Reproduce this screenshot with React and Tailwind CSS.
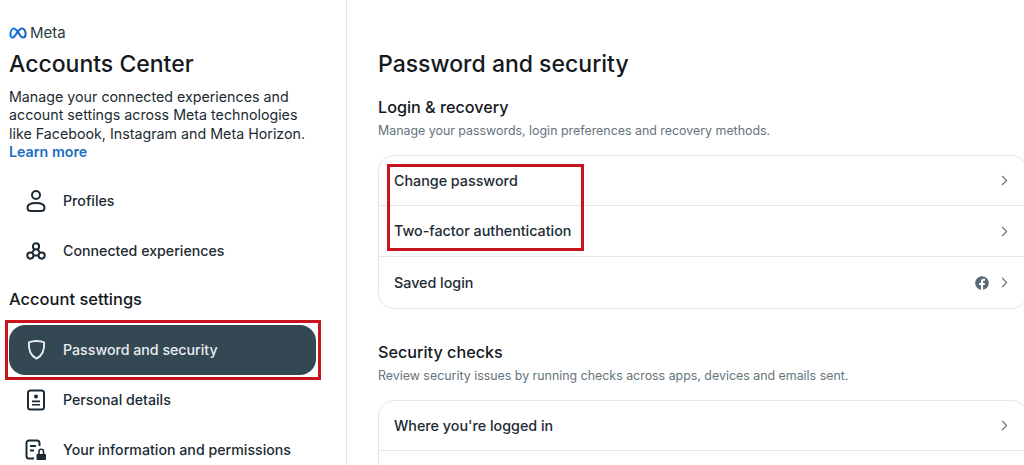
import React from 'react';
import { ChevronRight } from 'lucide-react';
import { FaFacebook } from 'react-icons/fa';

const font = { fontFamily: 'Inter' };

function MetaLogo() {
  return (
    <svg width="18" height="12" viewBox="0 0 18 12" fill="none">
      <defs>
        <linearGradient id="metaGrad" x1="0" y1="0" x2="18" y2="0" gradientUnits="userSpaceOnUse">
          <stop offset="0" stopColor="#0a7ce0" />
          <stop offset="1" stopColor="#1d5fb8" />
        </linearGradient>
      </defs>
      <path
        d="M1.4 7.6C1.4 4 3 1.4 4.9 1.4 7.2 1.4 9.6 6 11.4 8.8 12.2 10 13 10.6 14 10.6 15.6 10.6 16.6 9.2 16.6 7 16.6 3.8 15 1.4 13 1.4 11 1.4 9.2 3.6 7.4 6.6 5.8 9.2 5 10.6 3.5 10.6 2.2 10.6 1.4 9.4 1.4 7.6Z"
        stroke="url(#metaGrad)"
        strokeWidth="2"
        strokeLinejoin="round"
      />
    </svg>
  );
}

function ProfileIcon() {
  return (
    <svg width="22" height="24" viewBox="0 0 22 24" fill="none" stroke="currentColor" strokeWidth="2">
      <circle cx="11" cy="6" r="4" />
      <path d="M2.5 18.5C2.5 15.5 6 14 11 14S19.5 15.5 19.5 18.5C19.5 21 18 22 16 22H6C4 22 2.5 21 2.5 18.5Z" />
    </svg>
  );
}

function ConnectedIcon() {
  return (
    <svg width="20" height="20" viewBox="0 0 22 22" fill="none" stroke="currentColor" strokeWidth="2.2">
      <circle cx="11" cy="6" r="3.4" />
      <circle cx="4.8" cy="16" r="3.4" />
      <circle cx="17.2" cy="16" r="3.4" />
      <path d="M9.2 9 6.6 13M12.8 9 15.4 13M8.2 16H13.8" />
    </svg>
  );
}

function ShieldIcon() {
  return (
    <svg width="19" height="21" viewBox="0 0 20 22" fill="none" stroke="currentColor" strokeWidth="2" strokeLinejoin="round">
      <path d="M10 2C7 2 4 2.6 2 3.6 1.6 10 2.6 17 10 20.6 17.4 17 18.4 10 18 3.6 16 2.6 13 2 10 2Z" />
    </svg>
  );
}

function DetailsIcon() {
  return (
    <svg width="20" height="22" viewBox="0 0 20 22" fill="none" stroke="currentColor" strokeWidth="2">
      <rect x="2" y="1.5" width="16" height="19" rx="2.5" />
      <circle cx="10" cy="7.5" r="2" fill="currentColor" stroke="none" />
      <path d="M6 12.4H14M6 15.8H14" strokeWidth="1.6" />
    </svg>
  );
}

function InfoLockIcon() {
  return (
    <svg width="22" height="22" viewBox="0 0 22 22" fill="none" stroke="currentColor" strokeWidth="2">
      <path d="M9 19.5H4A2.5 2.5 0 0 1 1.5 17V4A2.5 2.5 0 0 1 4 1.5H12A2.5 2.5 0 0 1 14.5 4V7" />
      <path d="M5 7H11M5 11.5H9" />
      <rect x="11.5" y="15" width="9.5" height="6" rx="0.8" fill="currentColor" stroke="none" />
      <path d="M14 15V12.5A2.2 2.2 0 0 1 18.5 12.5V15" strokeWidth="1.6" />
    </svg>
  );
}

function NavItem({ icon, label, active }) {
  return (
    <div className={`flex h-[50px] items-center rounded-[16px] ${active ? 'bg-[#344854] text-[#e8edf0]' : 'text-[#1c2b33]'}`}>
      <div className="flex w-[54px] shrink-0 justify-center">{icon}</div>
      <span className="text-[14.2px] font-medium">{label}</span>
    </div>
  );
}

function Row({ label, facebook, className }) {
  return (
    <div className={`flex items-center pl-[15px] pr-[14px] ${className}`}>
      <span className="flex-1 text-[14.3px] font-medium text-[#1c2b33]">{label}</span>
      {facebook && <FaFacebook className="mr-[7px] text-[#5e6a73]" size={14} />}
      <ChevronRight className="text-[#6b7780]" size={17} strokeWidth={1.6} />
    </div>
  );
}

export default function App() {
  return (
    <div className="relative flex h-[465px] w-[1024px] overflow-hidden bg-white" style={font}>
      <aside className="h-full w-[347px] shrink-0 border-r border-[#e4e6e8] pl-[9px] pr-[20px] pt-[25px]">
        <div className="flex h-[16px] items-center gap-[3px]">
          <MetaLogo />
          <span className="text-[15px] text-[#2b3a42]">Meta</span>
        </div>
        <h1 className="mt-[8px] text-[23px] leading-[30px] font-medium text-[#14191d]">Accounts Center</h1>
        <p className="mt-[9px] text-[14.25px] leading-[18.4px] text-[#1c2b33]">
          Manage your connected experiences and<br />
          account settings across Meta technologies<br />
          like Facebook, Instagram and Meta Horizon.
          <a className="block font-semibold text-[#1a6fc0]">Learn more</a>
        </p>
        <nav className="mt-[14px] w-[307px]">
          <NavItem icon={<ProfileIcon />} label="Profiles" />
          <NavItem icon={<ConnectedIcon />} label="Connected experiences" />
          <h2 className="mt-[11px] mb-[14px] text-[16.5px] leading-[24px] font-medium text-[#14191d]">Account settings</h2>
          <NavItem icon={<ShieldIcon />} label="Password and security" active />
          <NavItem icon={<DetailsIcon />} label="Personal details" />
          <NavItem icon={<InfoLockIcon />} label="Your information and permissions" />
        </nav>
      </aside>

      <main className="min-w-0 flex-1 pl-[31px] pt-[48px]">
        <h2 className="text-[23px] leading-[32px] font-medium text-[#14191d]">Password and security</h2>
        <h3 className="mt-[16px] text-[16.2px] leading-[22px] font-medium text-[#14191d]">Login &amp; recovery</h3>
        <p className="mt-[4px] text-[12.4px] leading-[18px] text-[#65737c]">Manage your passwords, login preferences and recovery methods.</p>
        <div className="mt-[15px] w-[650px] rounded-[16px] border border-[#e4e6e8]">
          <Row label="Change password" className="h-[50px] border-b border-[#e4e6e8]" />
          <Row label="Two-factor authentication" className="h-[51px] border-b border-[#e4e6e8]" />
          <Row label="Saved login" facebook className="h-[51px]" />
        </div>
        <h3 className="mt-[32px] text-[16.2px] leading-[22px] font-medium text-[#14191d]">Security checks</h3>
        <p className="mt-[4px] text-[12.4px] leading-[18px] text-[#65737c]">Review security issues by running checks across apps, devices and emails sent.</p>
        <div className="mt-[15px] h-[120px] w-[650px] rounded-[16px] border border-[#e4e6e8]">
          <Row label="Where you're logged in" className="h-[50px] border-b border-[#e4e6e8]" />
        </div>
      </main>

      {/* red annotation boxes on top of the screenshot */}
      <div className="absolute left-[5px] top-[320px] h-[60px] w-[316px] border-[3px] border-[#c8141f]" />
      <div className="absolute left-[387px] top-[164px] h-[87px] w-[197px] border-[3px] border-[#c8141f]" />
    </div>
  );
}
